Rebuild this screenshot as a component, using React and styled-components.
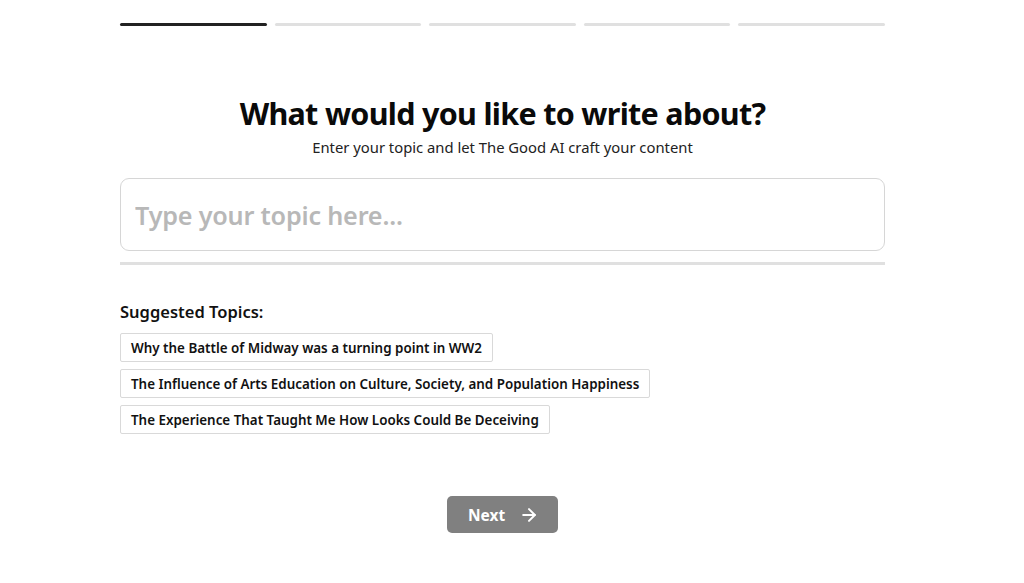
import React, { useState } from "react";
import styled, { createGlobalStyle } from "styled-components";
import { ArrowRight } from "lucide-react";

const GlobalStyle = createGlobalStyle`
  html, body {
    margin: 0;
    padding: 0;
    background: #fff;
    font-family: "Noto Sans", "Open Sans", sans-serif;
    color: #111;
  }
`;

const topics = [
  "Why the Battle of Midway was a turning point in WW2",
  "The Influence of Arts Education on Culture, Society, and Population Happiness",
  "The Experience That Taught Me How Looks Could Be Deceiving",
];

const Page = styled.div`
  padding-right: 19px;
`;

const Container = styled.div`
  max-width: 765px;
  margin: 0 auto;
  padding-top: 23px;
  display: flex;
  flex-direction: column;
`;

const Steps = styled.div`
  display: grid;
  grid-template-columns: repeat(5, 1fr);
  gap: 8px;
`;

const Step = styled.div`
  height: 3px;
  border-radius: 2px;
  background: ${(p) => (p.$active ? "#222" : "#e0e0e0")};
`;

const Title = styled.h1`
  margin: 67px 0 0;
  text-align: center;
  font-size: 30.5px;
  font-weight: 700;
  letter-spacing: -0.7px;
  line-height: 40px;
  color: #0a0a0a;
`;

const Subtitle = styled.p`
  margin: 4px 0 0;
  text-align: center;
  font-size: 14.8px;
  line-height: 20px;
  color: #222;
`;

const TopicInput = styled.input`
  margin-top: 21px;
  height: 73px;
  box-sizing: border-box;
  border: 1px solid #d6d6d6;
  border-radius: 9px;
  padding: 0 14px;
  font-family: inherit;
  font-size: 25.2px;
  font-weight: 600;
  letter-spacing: -0.2px;
  color: #222;
  outline: none;

  &::placeholder {
    color: #b8b8b8;
  }
`;

const Divider = styled.div`
  margin-top: 11px;
  height: 3px;
  background: #e0e0e0;
`;

const SectionLabel = styled.h2`
  margin: 36px 0 0;
  font-size: 16.5px;
  font-weight: 600;
  line-height: 22px;
  color: #111;
`;

const Chips = styled.div`
  margin-top: 10px;
  display: flex;
  flex-direction: column;
  align-items: flex-start;
  gap: 7px;
`;

const Chip = styled.button`
  height: 29px;
  padding: 0 10px;
  background: #fff;
  border: 1px solid #d9d9d9;
  border-radius: 2px;
  font-family: inherit;
  font-size: 13.4px;
  font-weight: 600;
  color: #111;
  cursor: pointer;
`;

const Footer = styled.div`
  margin-top: 62px;
  display: flex;
  justify-content: center;
`;

const NextButton = styled.button`
  width: 111px;
  height: 37px;
  display: flex;
  align-items: center;
  justify-content: center;
  gap: 14px;
  padding: 0 0 0 2px;
  background: #808080;
  border: none;
  border-radius: 5px;
  color: #fff;
  font-family: inherit;
  font-size: 15.5px;
  font-weight: 700;
  cursor: pointer;
`;

export default function App() {
  const [topic, setTopic] = useState("");

  return (
    <Page>
      <GlobalStyle />
      <Container>
        <Steps>
          {[0, 1, 2, 3, 4].map((i) => (
            <Step key={i} $active={i === 0} />
          ))}
        </Steps>
        <Title>What would you like to write about?</Title>
        <Subtitle>Enter your topic and let The Good AI craft your content</Subtitle>
        <TopicInput
          placeholder="Type your topic here..."
          value={topic}
          onChange={(e) => setTopic(e.target.value)}
        />
        <Divider />
        <SectionLabel>Suggested Topics:</SectionLabel>
        <Chips>
          {topics.map((t) => (
            <Chip key={t} onClick={() => setTopic(t)}>
              {t}
            </Chip>
          ))}
        </Chips>
        <Footer>
          <NextButton>
            Next
            <ArrowRight size={20} strokeWidth={2.4} />
          </NextButton>
        </Footer>
      </Container>
    </Page>
  );
}
